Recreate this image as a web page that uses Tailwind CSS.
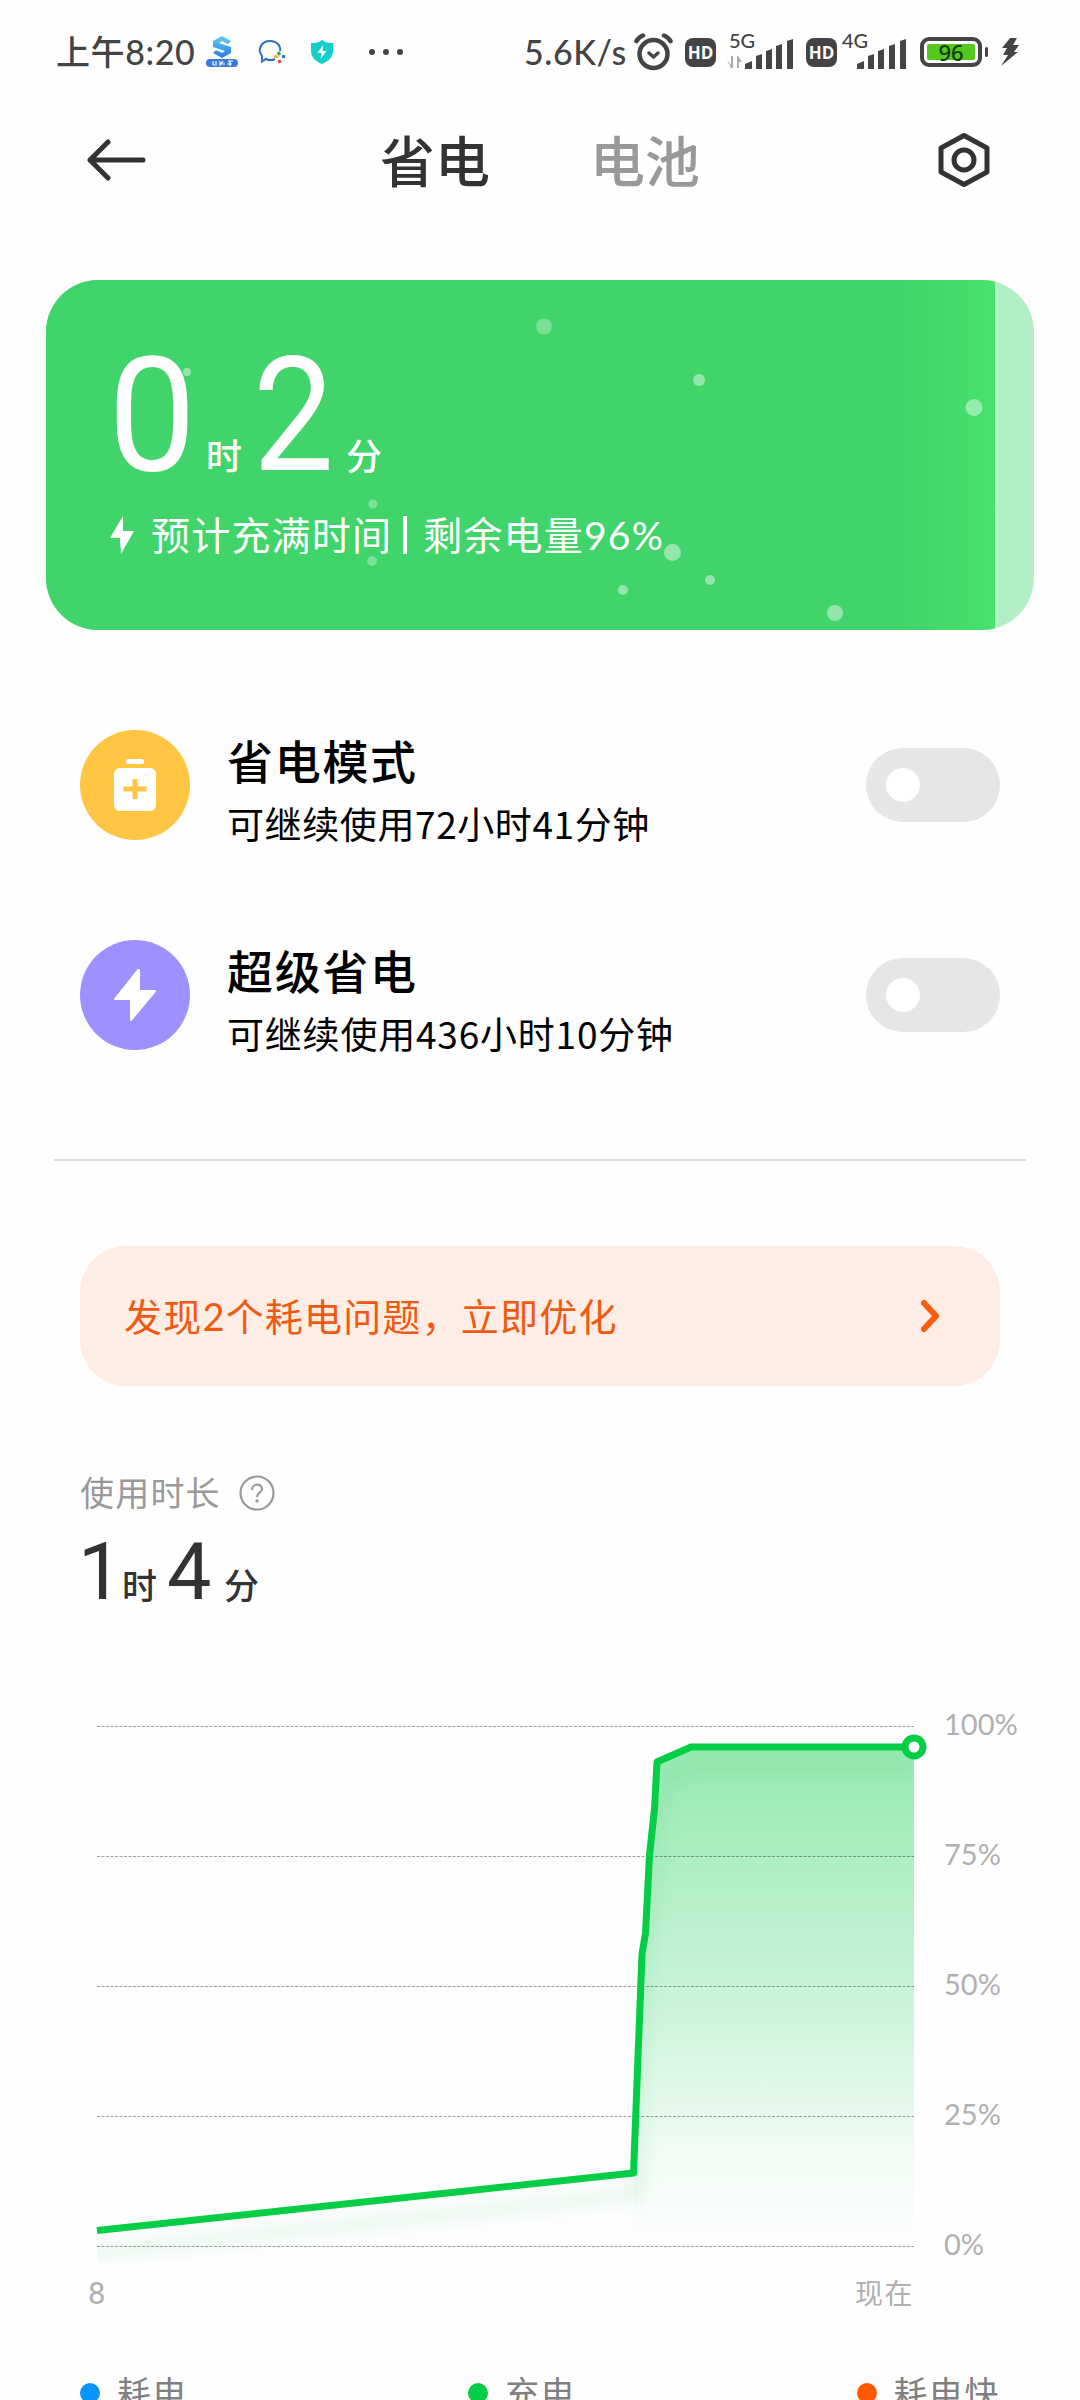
<!DOCTYPE html>
<html lang="zh-CN">
<head>
    <meta charset="UTF-8">
    <meta name="viewport" content="width=device-width, initial-scale=1.0">
    <title>省电与电池</title>
    <script src="https://cdn.jsdelivr.net/npm/@tailwindcss/browser@4"></script>
</head>
<body class="bg-[#fefefe] w-[1080px] h-[2400px] overflow-hidden font-['Lato','Noto_Sans_CJK_SC',sans-serif] text-black">

    <!-- Status bar -->
    <div class="flex items-center h-[104px] pl-[56px] text-[#444]">
        <div class="w-[150px] text-[34px] leading-none font-medium tracking-[0.6px] whitespace-nowrap">上午8:20</div>
        <svg class="w-[32px] h-[32px]" viewBox="0 0 32 32">
            <defs><linearGradient id="s" x1="0" y1="0" x2="0" y2="1"><stop offset="0" stop-color="#5fd0f0"/><stop offset="1" stop-color="#2b78e4"/></linearGradient></defs>
            <path d="M16 0l9 5-3 3-6-3-3 2 12 4v6l-9 5-9-5 3-3 6 3 3-2-12-4V5z" fill="url(#s)"/>
            <rect y="23" width="32" height="8" rx="4" fill="#3a7bd5"/>
            <path d="M7 25v4M7 29h4M10 25v3M14 25v5M17 25l-2 3h4M22 25h5M24 25v5M21 28h5" stroke="#fff" stroke-width="1.2" fill="none"/>
        </svg>
        <svg class="w-[28px] h-[26px] ml-[20px]" viewBox="0 0 28 26" fill="none">
            <path d="M17 20C14 21.500 10 21 8 20L4 22.500V17C-1 11 3 2 12 2C20 2 23 8 22 12" stroke="#2f6fc4" stroke-width="2"/>
            <path d="M20 13l2 3" stroke="#35a34a" stroke-width="3"/><path d="M24 17l3 1" stroke="#2f6fc4" stroke-width="3"/>
            <path d="M21 21l1 3" stroke="#e5432e" stroke-width="3"/><path d="M16 18l4-1" stroke="#f5b81c" stroke-width="3"/>
        </svg>
        <svg class="w-[22px] h-[24px] ml-[25px]" viewBox="0 0 22 24">
            <path d="M11 0C14 2.500 18 3 22 3V11C22 18 16 22 11 24C6 22 0 18 0 11V3C4 3 8 2.500 11 0Z" fill="#12cfc9"/>
            <path d="M12 5L6.500 13H10.500L9.500 19L15.500 11H11.500Z" fill="#fff"/>
        </svg>
        <svg class="w-[36px] h-[8px] ml-[35px]" viewBox="0 0 36 8" fill="#444"><circle cx="4" cy="4" r="3"/><circle cx="18" cy="4" r="3"/><circle cx="32" cy="4" r="3"/></svg>
        <div class="ml-[120px] w-[109px] text-[34px] leading-none font-medium tracking-[0.6px]">5.6K/s</div>
        <svg class="w-[40px] h-[38px]" viewBox="0 0 40 38" fill="none" stroke="#444" stroke-width="4.500" stroke-linecap="round">
            <circle cx="20.500" cy="21" r="14"/><path d="M3.500 8Q6 4 10 2.500M31 2.500Q35 4 37.500 8"/><path d="M16 20l4.500 4 4.500-4" stroke-width="3.500"/>
        </svg>
        <div class="ml-[12px] w-[31px] h-[29px] rounded-[8px] bg-[#444] text-white text-[17px] leading-[29px] text-center font-bold font-['Open_Sans',sans-serif]">HD</div>
        <div class="relative ml-[11px] w-[66px] h-[36px]">
            <div class="absolute left-[2px] -top-[4px] text-[20px] leading-none font-medium">5G</div>
            <svg class="w-[66px] h-[36px]" viewBox="0 0 66 36">
                <path d="M0 26l4 5V22h2v12H4zM10 34V22h1l4 6h-3v6z" fill="#aaa"/>
                <g fill="#444"><path d="M18 35V30l7-3v8zM29 35V22l6-2v15zM39 35V17l6-2v20zM49 35V12l6-2v25zM60 35V7l6-2v30z"/></g>
            </svg>
        </div>
        <div class="ml-[13px] w-[31px] h-[29px] rounded-[8px] bg-[#444] text-white text-[17px] leading-[29px] text-center font-bold font-['Open_Sans',sans-serif]">HD</div>
        <div class="relative ml-[4px] w-[66px] h-[36px]">
            <div class="absolute left-[1px] -top-[4px] text-[20px] leading-none font-medium">4G</div>
            <svg class="w-[66px] h-[36px]" viewBox="0 0 66 36" fill="#444">
                <path d="M16 35V30l7-3v8zM27 35V22l6-2v15zM37 35V17l6-2v20zM48 35V12l6-2v25zM59 35V7l6-2v30z"/>
            </svg>
        </div>
        <div class="ml-[13px] w-[62px] h-[30px] rounded-[9px] border-[4px] border-[#444] p-[3px]">
            <div class="h-full rounded-[2px] bg-[#55c81e] text-[#103c05] text-[22px] leading-[17px] text-center font-medium font-['Noto_Sans',sans-serif]">96</div>
        </div>
        <div class="ml-[3px] w-[3px] h-[10px] rounded-full bg-[#444]"></div>
        <svg class="ml-[13px] w-[18px] h-[28px]" viewBox="0 0 18 28" fill="#444"><path d="M9 0H16L12 7H18L13 14H17L0 28L7 17H2L6 10H1Z"/></svg>
    </div>

    <!-- Title bar -->
    <div class="flex items-center h-[112px] pl-[87px] text-[55px] leading-none">
        <svg class="w-[60px] h-[42px]" viewBox="0 0 60 42" fill="none" stroke="#333" stroke-width="5" stroke-linecap="round" stroke-linejoin="round"><path d="M56 21H3M21 3L3 21L21 39"/></svg>
        <div class="ml-[233px] w-[210px] pt-[2px] font-medium text-[#333]">省电</div>
        <div class="w-[347px] pt-[2px] font-medium text-[#999]">电池</div>
        <svg class="w-[54px] h-[56px]" viewBox="0 0 54 56" fill="none" stroke="#333" stroke-width="5" stroke-linejoin="round"><path d="M27 3.500L50 16V40L27 52.500L4 40V16Z"/><circle cx="27" cy="28" r="10"/></svg>
    </div>

    <!-- Charge card -->
    <div class="relative mx-[46px] mt-[64px] h-[350px] rounded-[52px] overflow-hidden bg-[#b2efc5] text-white">
        <div class="absolute inset-y-0 left-0 w-[949px] bg-linear-to-r from-[#41d46b] from-[90%] to-[#47e16d]"></div>
        <svg class="absolute inset-0 w-[988px] h-[350px]" viewBox="46 280 988 350" fill="#fff">
            <g fill-opacity=".3"><circle cx="544" cy="326.500" r="8"/><circle cx="373" cy="504" r="4.500"/><circle cx="372" cy="561" r="5"/></g>
            <g fill-opacity=".43"><circle cx="699" cy="380" r="6"/><circle cx="974" cy="407.500" r="8.500"/><circle cx="672.500" cy="552.500" r="8.500"/><circle cx="710" cy="580" r="5"/><circle cx="623" cy="590" r="5"/><circle cx="835" cy="613" r="8"/><circle cx="187" cy="372" r="4"/></g>
        </svg>
        <div class="relative flex items-baseline pt-[56px] pl-[63px] h-[220px] leading-none">
            <span class="w-[97px] text-[160px] leading-[160px] font-['Roboto',sans-serif] origin-left scale-x-[0.98] -translate-x-[1px]">0</span>
            <span class="w-[46px] text-[36px] font-medium">时</span>
            <span class="w-[94px] text-[160px] leading-[160px] font-['Roboto',sans-serif] origin-left scale-x-[0.9] translate-x-[1px]">2</span>
            <span class="text-[36px] font-medium">分</span>
        </div>
        <div class="relative flex items-center h-[70px] pl-[64px]">
            <svg class="w-[24px] h-[40px]" viewBox="0 0 24 40" fill="#fff"><path d="M13 1L0 23H10L11 39L24 16H13Z"/></svg>
            <div class="ml-[17px] text-[39px] leading-none tracking-[1.2px] whitespace-nowrap">预计充满时间</div>
            <div class="ml-[11px] mr-[16px] w-[4px] h-[38px] bg-white"></div>
            <div class="text-[39px] leading-none tracking-[1.2px] whitespace-nowrap">剩余电量96%</div>
        </div>
    </div>

    <!-- Saver modes -->
    <div class="flex items-center mt-[50px] h-[210px] pl-[80px] pr-[80px]">
        <svg class="w-[110px] h-[110px]" viewBox="0 0 110 110">
            <circle cx="55" cy="55" r="55" fill="#ffc543"/>
            <rect x="46" y="29" width="18" height="5" rx="2" fill="#fff"/><rect x="34" y="38" width="42" height="43" rx="6" fill="#fff"/>
            <path d="M55 49V69M43.500 59H66.500" stroke="#ffc543" stroke-width="5"/>
        </svg>
        <div class="ml-[37px] flex-1 pt-[16px]">
            <div class="text-[46px] leading-[60px] tracking-[1.700px] font-medium">省电模式</div>
            <div class="text-[37px] leading-[62px] tracking-[0.6px] font-['Noto_Sans_CJK_SC',sans-serif]">可继续使用72小时41分钟</div>
        </div>
        <div class="flex items-center w-[134px] h-[74px] rounded-full bg-[#e6e6e6] pl-[20px]"><div class="size-[34px] rounded-full bg-white"></div></div>
    </div>
    <div class="flex items-center h-[210px] pl-[80px] pr-[80px]">
        <svg class="w-[110px] h-[110px]" viewBox="0 0 110 110">
            <circle cx="55" cy="55" r="55" fill="#9f90ff"/>
            <path d="M58 30L35 59H51V80L75 51H59V30Z" fill="#fff" stroke="#fff" stroke-width="2" stroke-linejoin="round"/>
        </svg>
        <div class="ml-[37px] flex-1 pt-[16px]">
            <div class="text-[46px] leading-[60px] tracking-[1.700px] font-medium">超级省电</div>
            <div class="text-[37px] leading-[62px] tracking-[0.8px] font-['Noto_Sans_CJK_SC',sans-serif]">可继续使用436小时10分钟</div>
        </div>
        <div class="flex items-center w-[134px] h-[74px] rounded-full bg-[#e6e6e6] pl-[20px]"><div class="size-[34px] rounded-full bg-white"></div></div>
    </div>
    <div class="mx-[54px] mt-[59px] h-[2px] bg-[#dadada]"></div>

    <!-- Problem banner -->
    <div class="flex items-center justify-between mx-[80px] mt-[85px] h-[140px] rounded-[46px] bg-[#feede5] pl-[44px] pr-[58px] text-[#ee5a10]">
        <div class="text-[38px] leading-none tracking-[1.2px]">发现2个耗电问题，立即优化</div>
        <svg class="w-[24px] h-[36px]" viewBox="0 0 24 36" fill="none" stroke="#fc5a0c" stroke-width="6" stroke-linecap="round" stroke-linejoin="round"><path d="M6 5L18 18L6 31"/></svg>
    </div>

    <!-- Usage time -->
    <div class="flex items-center mt-[82px] h-[50px] pl-[80px] text-[#999]">
        <div class="w-[159px] text-[34px] leading-none tracking-[1.2px]">使用时长</div>
        <svg class="w-[36px] h-[36px]" viewBox="0 0 36 36" fill="none" stroke="#999" stroke-width="2.200">
            <circle cx="18" cy="18" r="16.500"/><path d="M13 15C13 8 23 8 23 14C23 18 18 17.500 18 22"/><circle cx="18" cy="26" r="1.200" fill="#999" stroke-width="1"/>
        </svg>
    </div>
    <div class="flex items-baseline h-[100px] pt-[15px] pl-[78px] leading-none text-[#333]">
        <span class="w-[44px] text-[79px] font-['Roboto',sans-serif]">1</span>
        <span class="w-[45px] text-[35px] font-medium">时</span>
        <span class="w-[57px] text-[79px] font-['Roboto',sans-serif]">4</span>
        <span class="text-[35px] font-medium">分</span>
    </div>

    <!-- Battery level chart -->
    <div class="flex mt-[43px] h-[602px]">
        <svg class="w-[930px] h-[602px]" viewBox="0 1661 930 602">
            <defs>
                <linearGradient id="area" gradientUnits="userSpaceOnUse" x1="0" y1="1747" x2="0" y2="2246"><stop offset="0" stop-color="#05cd46" stop-opacity=".42"/><stop offset=".5" stop-color="#05cd46" stop-opacity=".21"/><stop offset=".8" stop-color="#05cd46" stop-opacity=".06"/><stop offset="1" stop-color="#05cd46" stop-opacity="0"/></linearGradient>
                <filter id="soft" filterUnits="userSpaceOnUse" x="97" y="1700" width="817" height="590"><feGaussianBlur stdDeviation="8"/></filter>
                <clipPath id="plot"><path d="M97 2230.500L633.500 2173L642 1954L645.500 1933L649.500 1855L654.500 1809L657 1762L691 1747H914V2275H97Z"/></clipPath>
            </defs>
            <path d="M633.500 2246V2173L642 1954L645.500 1933L649.500 1855L654.500 1809L657 1762L691 1747H914V2246Z" fill="url(#area)"/>
            <g clip-path="url(#plot)"><path d="M80 2254L636 2194L644 1976L652 1877L661 1784L691 1767H914" fill="none" stroke="#3cb868" stroke-opacity=".18" stroke-width="9" filter="url(#soft)"/></g>
            <path d="M97 1726.500H914M97 1856.500H914M97 1986.500H914M97 2116.500H914M97 2246.500H914" stroke="#000" stroke-opacity=".36" stroke-width="1.200" stroke-dasharray="3 1.500"/>
            <path d="M97 2230.500L633.500 2173L642 1954L645.500 1933L649.500 1855L654.500 1809L657 1762L691 1747H914" fill="none" stroke="#05cd46" stroke-width="7" stroke-linejoin="round"/>
            <circle cx="914" cy="1747" r="9" fill="#fff" stroke="#05cd46" stroke-width="7"/>
        </svg>
        <div class="flex flex-col pl-[14px] pt-[43px] text-[29px] leading-[40px] gap-[90px] text-[#b0b0b0]">
            <div>100%</div>
            <div>75%</div>
            <div>50%</div>
            <div>25%</div>
            <div>0%</div>
        </div>
    </div>
    <div class="flex items-center justify-between h-[60px] pl-[88px] pr-[166px] text-[28px] leading-none text-[#b0b0b0]">
        <div class="text-[31px] font-['Roboto',sans-serif]">8</div>
        <div class="tracking-[1.500px]">现在</div>
    </div>

    <!-- Legend -->
    <div class="flex justify-between mt-[48px] pl-[80px] pr-[80px] text-[34px] leading-[44px] tracking-[1.500px] text-[#808080]">
        <div class="flex items-center gap-[17px]"><span class="size-[20px] rounded-full bg-[#0a94ff]"></span>耗电</div>
        <div class="flex items-center gap-[17px]"><span class="size-[20px] rounded-full bg-[#05cd46]"></span>充电</div>
        <div class="flex items-center gap-[17px]"><span class="size-[20px] rounded-full bg-[#ff5800]"></span>耗电快</div>
    </div>

</body>
</html>
